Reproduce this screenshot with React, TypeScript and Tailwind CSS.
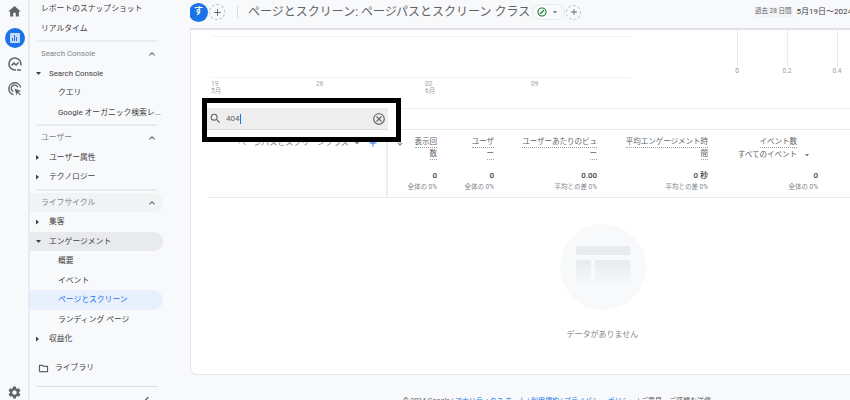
import { MdHome, MdSettings, MdSearch, MdArrowDropDown, MdExpandLess, MdOutlineFolder, MdAdd, MdArrowDownward, MdOutlineCancel } from 'react-icons/md';

const Divider = () => <div className="h-[2px] my-[2px] ml-[7px] w-[120px] bg-[#e8eaed]" />;

const Section = ({ title, tinted }: { title: string; tinted?: boolean }) => (
  <div className={`h-[19.5px] flex items-center justify-between pl-[11px] pr-[5px] w-[133px] rounded-r-full text-[#80868b] ${tinted ? 'bg-[#f1f3f4]' : ''}`}>
    <span>{title}</span>
    <MdExpandLess size={12} className="text-[#5f6368]" />
  </div>
);

const Group = ({ title, open, tinted }: { title: string; open?: boolean; tinted?: boolean }) => (
  <div className={`h-[19.5px] flex items-center w-[133px] rounded-r-full pl-[6px] text-[#3c4043] ${tinted ? 'bg-[#e8eaed]' : ''}`}>
    {open ? (
      <span className="w-[5px] h-[3px] mr-[8px] bg-[#3c4043] [clip-path:polygon(0_0,100%_0,50%_100%)]" />
    ) : (
      <span className="w-[3px] h-[5px] mr-[10px] bg-[#3c4043] [clip-path:polygon(0_0,100%_50%,0_100%)]" />
    )}
    <span>{title}</span>
  </div>
);

const Item = ({ title, active }: { title: string; active?: boolean }) => (
  <div className={`h-[19.5px] flex items-center w-[133px] rounded-r-full pl-[28px] whitespace-nowrap ${active ? 'bg-[#e8f0fe] text-[#1a73e8]' : 'text-[#3c4043]'}`}>
    {title}
  </div>
);

const Rail = () => (
  <div className="w-[30px] h-full shrink-0 flex flex-col items-center justify-between border-r-2 border-[#e8eaed] pl-[1px]">
    <div className="flex flex-col items-center pt-[4px]">
      <MdHome size={15} className="text-[#5f6368]" />
      <div className="mt-[9px] w-[20px] h-[20px] rounded-full bg-[#1a73e8] flex items-center justify-center">
        <div className="w-[10px] h-[10px] rounded-[1px] bg-[#c6dafc] flex items-end justify-center gap-[1px] pb-[2px]">
          <span className="w-[1px] h-[3px] bg-[#1a73e8]" />
          <span className="w-[1px] h-[6px] bg-[#1a73e8]" />
          <span className="w-[1px] h-[4px] bg-[#1a73e8]" />
        </div>
      </div>
      <svg className="mt-[9px]" width="14" height="14" viewBox="0 0 14 14" fill="none" stroke="#5f6368" strokeWidth="1.5">
        <path d="M12.7 8.5A6 6 0 1 0 8 12.9" />
        <path d="M3.5 8.5 6 6l2 2 2.5-2.5" />
        <path d="M9 13h4" />
      </svg>
      <svg className="mt-[11px]" width="14" height="14" viewBox="0 0 14 14" fill="none" stroke="#5f6368" strokeWidth="1.4">
        <path d="M5.5 12.6A6 6 0 1 1 12.7 5.5" />
        <path d="M5.4 9.6A3.4 3.4 0 1 1 9.8 5.2" />
        <path d="M6.5 6.5 13 9l-2.6 1 2.4 2.6-.8.7-2.4-2.6-1 2.6z" fill="#5f6368" stroke="none" />
      </svg>
    </div>
    <MdSettings size={15} className="text-[#5f6368]" />
  </div>
);

const Sidebar = () => (
  <div className="w-[133px] shrink-0 h-full text-[7.8px] -mt-[0.75px]">
    <div className="h-[19.5px] pl-[11px] flex items-center text-[#3c4043] whitespace-nowrap">レポートのスナップショット</div>
    <div className="h-[19.5px] pl-[11px] flex items-center text-[#3c4043]">リアルタイム</div>
    <Divider />
    <Section title="Search Console" />
    <Group title="Search Console" open />
    <Item title="クエリ" />
    <Item title="Google オーガニック検索レ..." />
    <Divider />
    <Section title="ユーザー" />
    <Group title="ユーザー属性" />
    <Group title="テクノロジー" />
    <Divider />
    <Section title="ライフサイクル" tinted />
    <Group title="集客" />
    <Group title="エンゲージメント" open tinted />
    <Item title="概要" />
    <Item title="イベント" />
    <Item title="ページとスクリーン" active />
    <Item title="ランディング ページ" />
    <Group title="収益化" />
    <div className="h-[19.5px] mt-[9.5px] flex items-center pl-[8px] text-[#3c4043]">
      <MdOutlineFolder size={11} className="mr-[6px]" />
      ライブラリ
    </div>
    <div className="h-[1px] mt-[8px] ml-[7px] w-[121px] bg-[#dadce0]" />
    <div className="ml-[115px] mt-[11px] w-[6px] h-[6px] border-l border-t border-[#3c4043] rotate-[-45deg]" />
  </div>
);

const Header = () => (
  <div className="h-[30px] shrink-0 flex items-center border-b-2 border-[#e1e3e6] whitespace-nowrap overflow-hidden pb-[4px]">
    <div className="-ml-[1px] w-[19px] h-[19px] rounded-full bg-[#1a73e8] text-white text-[9px] font-bold flex items-center justify-center shrink-0">す</div>
    <div className="ml-[1px] w-[16px] h-[16px] rounded-full border border-dashed border-[#bdc1c6] flex items-center justify-center shrink-0">
      <MdAdd size={11} className="text-[#5f6368]" />
    </div>
    <div className="ml-[12px] w-[1px] h-[12px] bg-[#dadce0] shrink-0" />
    <div className="ml-[10px] text-[12px] text-[#5f6368] w-[284px] shrink-0">ページとスクリーン: ページパスとスクリーン クラス</div>
    <div className="w-[33px] h-[16px] rounded-full border border-[#e8eaed] flex items-center pl-[4px] shrink-0">
      <svg width="10" height="10" viewBox="0 0 10 10" fill="none" stroke="#188038" strokeWidth="1.1">
        <circle cx="5" cy="5" r="4" />
        <path d="M3 7 7 3" />
      </svg>
      <MdArrowDropDown size={10} className="ml-[3px] text-[#5f6368]" />
    </div>
    <div className="ml-[1px] w-[15px] h-[15px] rounded-full border border-dashed border-[#bdc1c6] flex items-center justify-center shrink-0">
      <MdAdd size={10} className="text-[#5f6368]" />
    </div>
    <div className="ml-[173px] px-[1px] bg-[#f1f3f4] text-[6.5px] text-[#5f6368] shrink-0">過去 28 日間</div>
    <div className="ml-[4px] text-[8px] text-[#3c4043] shrink-0">5月19日～2024</div>
  </div>
);

const Chart = () => (
  <div className="h-[78px] flex text-[#9aa0a6] text-[6.5px] leading-[7px]">
    <div className="w-[420px] shrink-0 ml-[20px] flex flex-col">
      <div className="h-[7px] border-b border-[#f1f3f4]" />
      <div className="h-[41px] border-b border-[#f1f3f4]" />
      <div className="flex pt-[3px]">
        <div className="w-[105px]">19<br />5月</div>
        <div className="w-[109px]">26</div>
        <div className="w-[106px]">02<br />6月</div>
        <div>09</div>
      </div>
    </div>
    <div className="ml-[81px] flex shrink-0">
      {['0', '0.2', '0.4'].map((t) => (
        <div key={t} className="w-[50px] flex flex-col items-center">
          <div className="w-[1px] h-[36px] bg-[#e8eaed]" />
          <div className={`mt-[2px] ${t === '0' ? 'text-[#b08a78]' : ''}`}>{t}</div>
        </div>
      ))}
    </div>
  </div>
);

const columns = [
  { w: 'w-[49px]', lines: ['表示回', '数'], value: '0', sub: '全体の 0%' },
  { w: 'w-[57px]', lines: ['ユーザ', 'ー'], value: '0', sub: '全体の 0%' },
  { w: 'w-[103px]', lines: ['ユーザーあたりのビュ', 'ー'], value: '0.00', sub: '平均との差 0%' },
  { w: 'w-[111px]', lines: ['平均エンゲージメント時', '間'], value: '0 秒', sub: '平均との差 0%' },
];

const Table = () => (
  <div className="ml-[17px] border-t border-[#eceef0]">
    <div className="h-[21px] border-b border-[#e8eaed]" />
    <div className="h-[68px] flex border-b border-[#e8eaed] text-[8px] text-[#5f6368]">
      <div className="w-[180px] shrink-0 border-r-2 border-[#eceef0] pt-[7px] flex items-start whitespace-nowrap">
        <span className="ml-[30px] text-[#80868b]">ページパスとスクリーンクラス</span>
        <MdArrowDropDown size={10} className="ml-[3px] mt-[1px] shrink-0" />
        <MdAdd size={12} className="ml-[5px] text-[#1a73e8] shrink-0" />
        <MdArrowDownward size={8} className="ml-[17px] mt-[2px] shrink-0" />
      </div>
      {columns.map((c) => (
        <div key={c.w} className={`${c.w} shrink-0 text-right pt-[6px]`}>
          <div className="h-[34px] flex flex-col items-end text-[7.5px]">
            {c.lines.map((l) => (
              <span key={l} className="border-b border-dotted border-[#9aa0a6] leading-[11px]">{l}</span>
            ))}
          </div>
          <div className="text-[#3c4043] font-medium leading-[11px]">{c.value}</div>
          <div className="mt-[1px] text-[6.5px] text-[#80868b] leading-[11px]">{c.sub}</div>
        </div>
      ))}
      <div className="w-[110px] shrink-0 text-right pt-[6px]">
        <div className="h-[34px] flex flex-col items-end pr-[21px] text-[7.5px]">
          <span className="border-b border-dotted border-[#9aa0a6] leading-[11px]">イベント数</span>
          <span className="flex items-center leading-[11px] -mr-[15px] mt-[1px] whitespace-nowrap">
            すべてのイベント
            <MdArrowDropDown size={10} className="ml-[5px] shrink-0" />
          </span>
        </div>
        <div className="text-[#3c4043] font-medium leading-[11px]">0</div>
        <div className="mt-[1px] text-[6.5px] text-[#80868b] leading-[11px]">全体の 0%</div>
      </div>
    </div>
  </div>
);

const Empty = () => (
  <div className="flex flex-col items-center ml-[164px] pt-[26px]">
    <div className="w-[86px] h-[86px] rounded-full bg-[#f8f9fa] flex flex-col gap-[5px] items-center pt-[22px]">
      <div className="w-[54px] h-[9px] rounded-[2px] bg-[#e8eaed]" />
      <div className="flex gap-[4px]">
        <div className="w-[15px] h-[26px] rounded-t-[2px] bg-gradient-to-b from-[#e8eaed] to-[#f8f9fa]" />
        <div className="w-[35px] h-[26px] rounded-t-[2px] bg-gradient-to-b from-[#e8eaed] to-[#f8f9fa]" />
      </div>
    </div>
    <div className="mt-[19px] text-[8px] text-[#80868b]">データがありません</div>
  </div>
);

const SearchOverlay = () => (
  <div className="absolute left-[202px] top-[98px] w-[199px] h-[44px] border-[5px] border-black bg-white">
    <div className="mt-[5px] h-[22px] w-[181px] bg-[#eeeeee] border-b border-[#dadce0] flex items-center pl-[2px] pr-[1px] text-[8px] text-[#5f6368]">
      <MdSearch size={13} />
      <span className="ml-[4px] border-r border-[#1a73e8] leading-[10px]">404</span>
      <MdOutlineCancel size={14} className="ml-auto mr-[1px]" />
    </div>
  </div>
);

export default function App() {
  return (
    <div className="relative w-[850px] h-[400px] overflow-hidden flex bg-[#f8f9fa] font-[Roboto,'Noto_Sans_CJK_JP',sans-serif]">
      <Rail />
      <Sidebar />
      <div className="flex-1 min-w-0 ml-[27px] h-full flex flex-col">
        <Header />
        <div className="h-[345px] shrink-0 bg-white rounded-bl-[6px] border-l border-b border-[#e3e5e8]">
          <Chart />
          <Table />
          <Empty />
        </div>
        <div className="mt-[21px] ml-[213px] text-[7px] text-[#5f6368] whitespace-nowrap">
          © 2024 Google | <span className="text-[#1a73e8]">アナリティクス ホーム | 利用規約 | プライバシー ポリシー</span> | ご意見・ご感想を送信
        </div>
      </div>
      <SearchOverlay />
    </div>
  );
}
